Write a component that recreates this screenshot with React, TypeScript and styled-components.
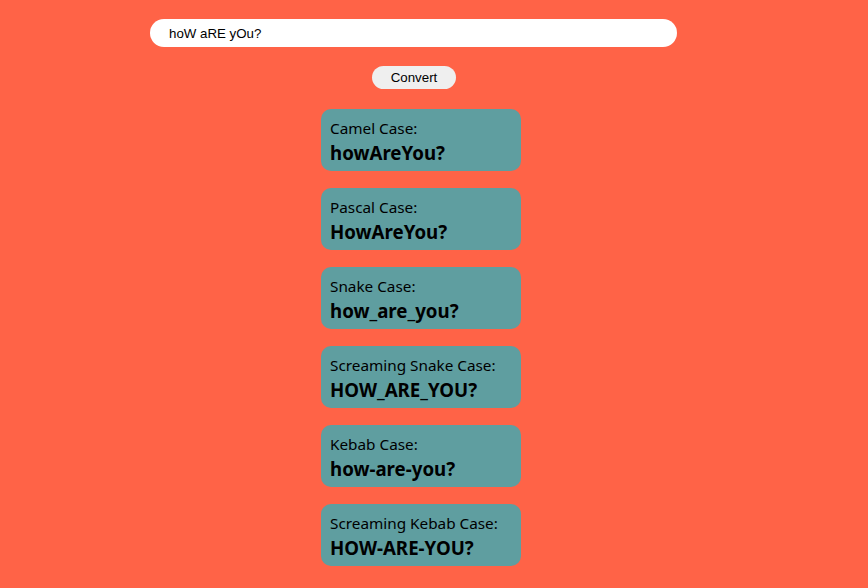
import React, { useState } from "react";
import styled, { createGlobalStyle } from "styled-components";

const Global = createGlobalStyle`
  html, body { margin: 0; padding: 0; background: #ff6347; }
  body { font-family: "Noto Sans", "Open Sans", sans-serif; }
`;

const Page = styled.div`
  display: flex;
  flex-direction: column;
  align-items: flex-start;
  padding-top: 19px;
  min-height: 588px;
  box-sizing: border-box;
`;

const Input = styled.input`
  margin-left: 150px;
  width: 527px;
  height: 28px;
  box-sizing: border-box;
  border: none;
  outline: none;
  border-radius: 14px;
  background: #fff;
  padding: 0 19px;
  font-family: "Liberation Sans", Arial, sans-serif;
  font-size: 13.3px;
  color: #000;
`;

const Button = styled.button`
  margin-top: 19px;
  margin-left: 372px;
  width: 84px;
  height: 23px;
  border: none;
  border-radius: 12px;
  background: #efefef;
  font-family: "Liberation Sans", Arial, sans-serif;
  font-size: 13.3px;
  color: #000;
  padding: 0;
`;

const List = styled.div`
  margin-top: 20px;
  margin-left: 321px;
  display: flex;
  flex-direction: column;
  gap: 17px;
`;

const Card = styled.div`
  width: 200px;
  height: 62px;
  box-sizing: border-box;
  background: #5f9ea0;
  border-radius: 10px;
  padding: 9px 9px 0;
  display: flex;
  flex-direction: column;
`;

const Label = styled.div`
  font-size: 15.3px;
  line-height: 21px;
  color: #000;
`;

const Value = styled.div`
  margin-top: 1px;
  font-size: 18.7px;
  font-weight: 700;
  line-height: 26px;
  color: #000;
`;

const items = [
  ["Camel Case:", "howAreYou?"],
  ["Pascal Case:", "HowAreYou?"],
  ["Snake Case:", "how_are_you?"],
  ["Screaming Snake Case:", "HOW_ARE_YOU?"],
  ["Kebab Case:", "how-are-you?"],
  ["Screaming Kebab Case:", "HOW-ARE-YOU?"],
];

export default function App() {
  const [text, setText] = useState("hoW aRE yOu?");
  return (
    <>
      <Global />
      <Page>
        <Input value={text} onChange={(e) => setText(e.target.value)} />
        <Button>Convert</Button>
        <List>
          {items.map(([l, v]) => (
            <Card key={l}>
              <Label>{l}</Label>
              <Value>{v}</Value>
            </Card>
          ))}
        </List>
      </Page>
    </>
  );
}
